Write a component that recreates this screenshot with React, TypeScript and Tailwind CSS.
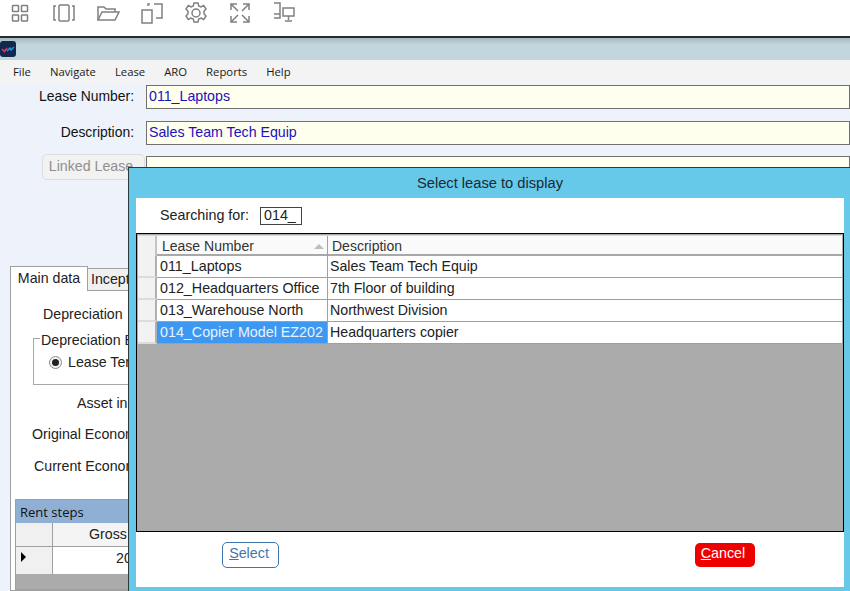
import React from "react";

const arial = "font-['Liberation_Sans',Arial,sans-serif]";

function ToolIcon({ children, className }: { children: React.ReactNode; className: string }) {
    return (
        <svg viewBox="0 0 24 24" fill="none" stroke="#808080" strokeWidth="1.5" className={className}>
            {children}
        </svg>
    );
}

function Toolbar() {
    return (
        <div className="h-[36px] bg-white flex items-start pt-[1px] pl-[8px] gap-[20px] shrink-0">
            <ToolIcon className="w-[24px] h-[24px] shrink-0">
                <rect x="4.500" y="4.500" width="6" height="6" rx="0.5" />
                <rect x="13.500" y="4.500" width="6" height="6" rx="0.5" />
                <rect x="4.500" y="14" width="6" height="6" rx="0.5" />
                <rect x="13.500" y="14" width="6" height="6" rx="0.5" />
            </ToolIcon>
            <ToolIcon className="w-[24px] h-[24px] shrink-0">
                <rect x="7" y="4" width="10" height="16" rx="1" />
                <path d="M4 5H2v14h2M20 5h2v14h-2" />
            </ToolIcon>
            <ToolIcon className="w-[24px] h-[24px] shrink-0">
                <path d="M2 19V6h6l2 2h9v3" />
                <path d="M2 19l4-8h17l-4 8z" />
            </ToolIcon>
            <ToolIcon className="w-[24px] h-[24px] shrink-0">
                <path d="M2 9h10v13H2z" />
                <path d="M8 5V3h2M14 3h8v14h-6" />
            </ToolIcon>
            <ToolIcon className="w-[24px] h-[24px] shrink-0">
                <path d="M10 2h4l.7 3 2.300 1 2.700-1.500 2.300 3.500-2 2.200v2.600l2 2.200-2.300 3.500-2.700-1.500-2.300 1-.7 3h-4l-.7-3-2.300-1-2.700 1.500-2.300-3.500 2-2.200v-2.600l-2-2.200 2.300-3.500 2.700 1.500 2.300-1z" />
                <circle cx="12" cy="12" r="4" />
            </ToolIcon>
            <ToolIcon className="w-[24px] h-[24px] shrink-0">
                <path d="M3 3l7 7M21 3l-7 7M3 21l7-7M21 21l-7-7" />
                <path d="M3 9V3h6M15 3h6v6M3 15v6h6M21 15v6h-6" />
            </ToolIcon>
            <ToolIcon className="w-[24px] h-[24px] shrink-0">
                <path d="M2 2h6v15H2M2 13h6" />
                <rect x="11" y="7" width="11" height="8" />
                <path d="M16.500 15v4M13 20h7" />
            </ToolIcon>
        </div>
    );
}

function Menu() {
    return (
        <div className="h-[24px] bg-[#f3f3f3] flex items-center pl-[13px] gap-[19px] text-[11.300px] text-[#1a1a1a] font-['Open_Sans',sans-serif] shrink-0">
            <span>File</span>
            <span>Navigate</span>
            <span>Lease</span>
            <span>ARO</span>
            <span>Reports</span>
            <span>Help</span>
        </div>
    );
}

function Field({ label, value }: { label: string; value: string }) {
    return (
        <div className="flex items-center h-[24px]">
            <span className="w-[134px] pb-[1px] text-right text-[13.900px] text-[#111]">{label}</span>
            <div className="ml-[12px] flex-1 h-[24px] bg-[#ffffee] border border-[#707070] px-[2px] pb-[1px] flex items-center text-[14.200px] text-[#1c10c0]">
                {value}
            </div>
        </div>
    );
}

function LeaseModal() {
    const rows = [
        ["011_Laptops", "Sales Team Tech Equip"],
        ["012_Headquarters Office", "7th Floor of building"],
        ["013_Warehouse North", "Northwest Division"],
        ["014_Copier Model EZ202", "Headquarters copier"],
    ];
    return (
        <div className={`absolute left-[128px] top-[167px] w-[722px] h-[424px] bg-[#66c9ea] border-l border-t border-[#2b3a40] pl-[7px] pr-[6px] pb-[4px] flex flex-col ${arial}`}>
            <div className="h-[30px] shrink-0 flex items-center justify-center text-[14.700px] text-[#1c2a30]">
                Select lease to display
            </div>
            <div className="flex-1 bg-white flex flex-col">
                <div className="h-[35px] shrink-0 flex items-center pl-[24px] text-[14.300px] text-[#222]">
                    <span>Searching for:</span>
                    <div className="ml-[11px] w-[42px] h-[18px] border border-[#444] pl-[3px] flex items-center">014_</div>
                </div>
                <div className="h-[299px] shrink-0 border border-black bg-[#ababab] p-px flex flex-col">
                    <div className="grid grid-cols-[19px_171px_1fr] bg-[#fafafa] text-[14px] text-[#333] h-[21px] border-t border-[#d8d8d8] border-b-2 border-b-[#a8a8a8]">
                        <div className="bg-[#f2f2f2] border-r-2 border-[#c4c4c4]" />
                        <div className="flex items-center pl-[5px] pr-[3px] pb-px justify-between border-r border-[#a0a0a0]">
                            <span>Lease Number</span>
                            <span className="w-0 h-0 border-l-[5px] border-r-[5px] border-b-[5px] border-l-transparent border-r-transparent border-b-[#bdbdbd]" />
                        </div>
                        <div className="flex items-center pl-[4px] pb-px">Description</div>
                    </div>
                    {rows.map((row, i) => (
                        <div key={row[0]} className="grid grid-cols-[19px_171px_1fr] h-[22px] text-[14.200px] text-[#222] bg-white border-b border-[#a0a0a0]">
                            <div className="-mb-px bg-[#f2f2f2] border-r-2 border-[#b0b0b0] border-b-2 border-b-[#dcdcdc]" />
                            <div className={`flex items-center pl-[3px] text-[14.300px] border-r border-[#a0a0a0] ${i === 3 ? "bg-[#3d98f2] text-[#e8f3ff]" : ""}`}>
                                {row[0]}
                            </div>
                            <div className="flex items-center pl-[2px]">{row[1]}</div>
                        </div>
                    ))}
                </div>
                <div className="flex-1 flex items-start justify-between pl-[86px] pr-[89px] pt-[10px]">
                    <button className="w-[57px] h-[26px] rounded-[5px] border border-[#3f75ad] text-[#3f75ad] text-[14.300px] bg-white pr-[3px] pb-[3px]">
                        <span className="underline">S</span>elect
                    </button>
                    <button className="w-[60px] h-[24px] mt-[1px] rounded-[5px] bg-[#ee0000] text-white text-[14.300px] pr-[4px] pb-[3px]">
                        <span className="underline">C</span>ancel
                    </button>
                </div>
            </div>
        </div>
    );
}

export default function App() {
    return (
        <div className={`relative w-[850px] h-[591px] overflow-hidden bg-[#eef3fb] flex flex-col ${arial}`}>
            <Toolbar />
            <div className="h-[24px] shrink-0 border-t-2 border-[#2a2a2a] bg-linear-to-b from-[#a3b8c2] to-[#c3d6de] to-[30%] flex items-center">
                <svg viewBox="0 0 16 16" className="w-[16px] h-[16px]">
                    <rect width="16" height="16" rx="3" fill="#12284c" />
                    <path d="M2 8l2.500 2.500L7 7" fill="none" stroke="#e23a5e" strokeWidth="1.500" />
                    <path d="M7 10l3-3 1 2 3-3" fill="none" stroke="#2a8fe0" strokeWidth="1.500" />
                </svg>
            </div>
            <Menu />
            <div className="flex-1 flex flex-col pt-px">
                <Field label="Lease Number:" value="011_Laptops" />
                <div className="mt-[12px]">
                    <Field label="Description:" value="Sales Team Tech Equip" />
                </div>
                <div className="mt-[9px] flex items-start">
                    <button className="ml-[42px] w-[103px] h-[26px] rounded-[5px] bg-[#f2f2f2] border border-[#dcdcdc] text-[14.200px] text-[#8f8f8f] pr-[5px] pb-[1px]">
                        Linked Lease
                    </button>
                    <div className="ml-px flex-1 h-[24px] mt-[2px] bg-[#ffffee] border border-[#707070]" />
                </div>
                <div className="mt-[86px] ml-[10px] flex items-end h-[25px]">
                    <div className="w-[78px] h-[25px] bg-white border border-b-0 border-[#a0a0a0] flex items-center justify-center text-[14.200px] text-[#222] relative z-10">
                        Main data
                    </div>
                    <div className="w-[90px] h-[23px] bg-[#f0f0f0] border border-l-0 border-[#a0a0a0] pl-[3px] flex items-center text-[14.200px] text-[#222]">
                        Inception
                    </div>
                </div>
                <div className="ml-[10px] -mt-px flex-1 bg-white border border-[#a0a0a0] text-[14.200px] text-[#222] flex flex-col">
                    <div className="mt-[13px] ml-[32px]">Depreciation</div>
                    <div className="relative mt-[13px] ml-[22px] h-[47px] border border-[#a8a8a8] flex items-center pl-[15px] pt-[2px]">
                        <span className="absolute -top-[9px] left-[6px] bg-white px-px">Depreciation Basis</span>
                        <span className="w-[13px] h-[13px] rounded-full border border-[#888] flex items-center justify-center bg-[#f4f4f4]">
                            <span className="w-[7px] h-[7px] rounded-full bg-[#222]" />
                        </span>
                        <span className="ml-[6px]">Lease Term</span>
                    </div>
                    <div className="mt-[8px] ml-[66px]">Asset in service</div>
                    <div className="mt-[9px] ml-[21px]">Original Economic Life</div>
                    <div className="mt-[11px] ml-[23px]">Current Economic Life</div>
                    <div className="mt-[22px] ml-[4px] flex-1 border border-[#a0a0a0] bg-[#ababab] flex flex-col">
                        <div className="h-[23px] bg-[#8fb0d4] flex items-center pl-[4px] pt-[2px] text-[13px] text-[#111] font-['Open_Sans',sans-serif]">
                            Rent steps
                        </div>
                        <div className="grid grid-cols-[37px_1fr] h-[24px] border-b border-[#a0a0a0]">
                            <div className="bg-[#f0f0f0] border-r border-[#a0a0a0]" />
                            <div className="bg-[#f4f4f4] pl-[36px] flex items-center">Gross</div>
                        </div>
                        <div className="grid grid-cols-[37px_1fr] h-[27px]">
                            <div className="bg-[#f0f0f0] border-r border-[#a0a0a0] flex items-center pl-[5px] pb-[7px]">
                                <span className="w-0 h-0 border-t-[5px] border-b-[5px] border-l-[5px] border-t-transparent border-b-transparent border-l-black" />
                            </div>
                            <div className="bg-white pl-[63px] pb-[4px] flex items-center">20</div>
                        </div>
                    </div>
                </div>
            </div>
            <LeaseModal />
        </div>
    );
}
